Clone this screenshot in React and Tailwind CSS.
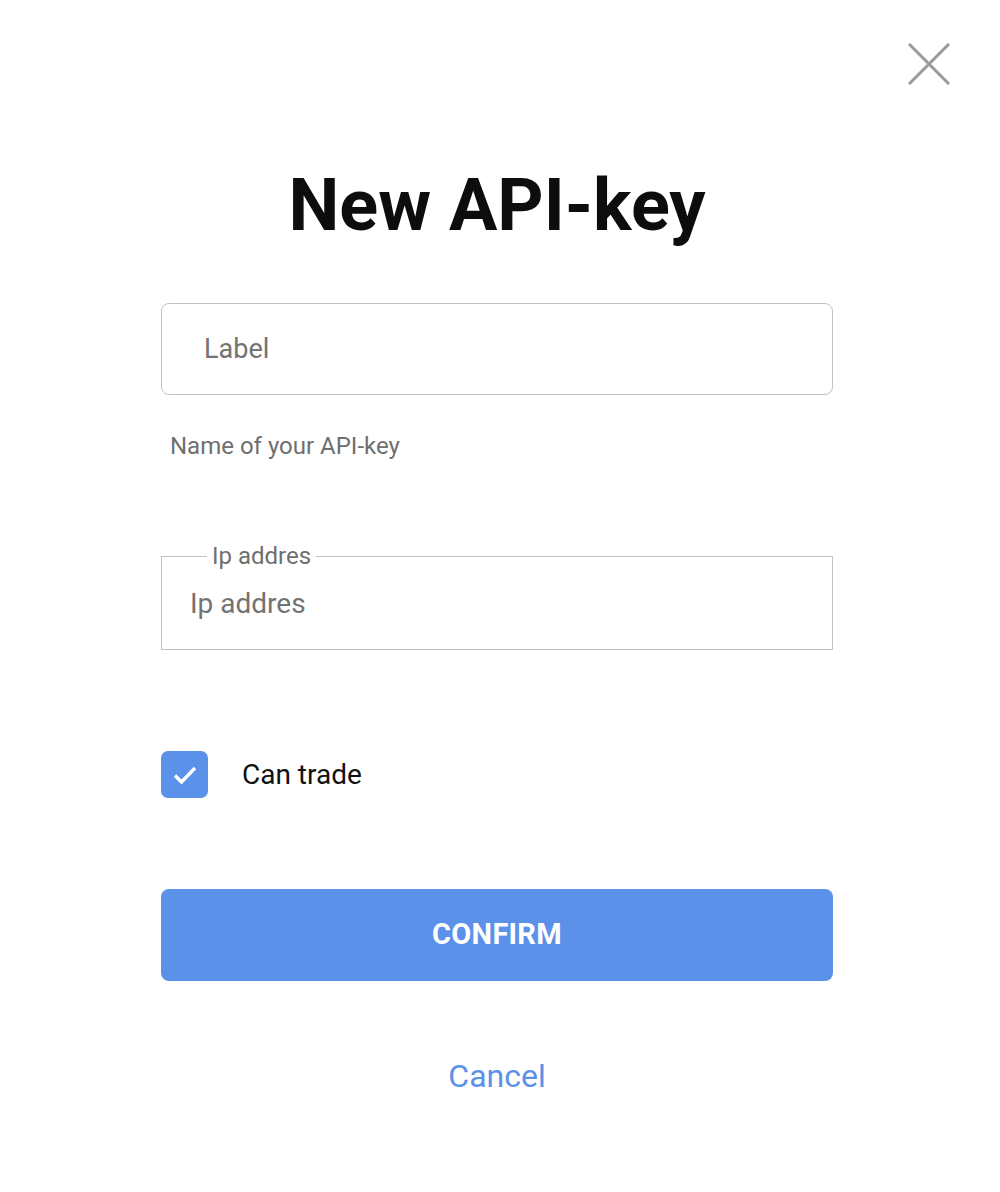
import React, { useState } from 'react';

const font = { fontFamily: 'Roboto, "Noto Sans", sans-serif' };

function CloseIcon() {
  return (
    <svg width="42" height="42" viewBox="0 0 42 42" fill="none">
      <path d="M1 1L41 41M41 1L1 41" stroke="#9a9a9a" strokeWidth="3" />
    </svg>
  );
}

function Checkbox({ checked, onChange }) {
  return (
    <button
      type="button"
      onClick={() => onChange(!checked)}
      className={`w-[47px] h-[47px] rounded-[7px] flex items-center justify-center ${
        checked ? 'bg-[#5b91e9]' : 'border-2 border-[#c4c4c4] bg-white'
      }`}
    >
      {checked && (
        <svg width="24" height="20" viewBox="0 0 24 20" fill="none">
          <path d="M2 10.5L8.5 17L22 3" stroke="white" strokeWidth="3.4" />
        </svg>
      )}
    </button>
  );
}

function App() {
  const [label, setLabel] = useState('');
  const [ip, setIp] = useState('');
  const [canTrade, setCanTrade] = useState(true);

  return (
    <div className="min-h-[1192px] bg-white" style={font}>
      <div className="flex justify-end pt-[43px] pr-[50px]">
        <button type="button">
          <CloseIcon />
        </button>
      </div>

      <div className="w-[672px] ml-[161px] flex flex-col">
        <h1 className="mt-[85px] text-center text-[72px] leading-none font-bold text-[#0d0d0d]">
          New API-key
        </h1>

        {/* label field */}
        <input
          value={label}
          onChange={(e) => setLabel(e.target.value)}
          placeholder="Label"
          className="mt-[61px] h-[92px] w-full rounded-[8px] border-[1.5px] border-[#c2c2c2] px-[42px] text-[27px] text-[#222] placeholder:text-[#737373] outline-none"
        />
        <p className="mt-[36px] pl-[9px] text-[24px] leading-[30px] text-[#6f6f6f]">
          Name of your API-key
        </p>

        {/* ip field */}
        <fieldset className="mt-[81px] h-[108px] border-[1.5px] border-[#c2c2c2] px-[28px]">
          <legend className="ml-[17px] px-[5px] text-[24px] leading-[28px] text-[#6f6f6f]">
            Ip addres
          </legend>
          <input
            value={ip}
            onChange={(e) => setIp(e.target.value)}
            placeholder="Ip addres"
            className="mt-[17px] h-[34px] w-full text-[28px] text-[#222] placeholder:text-[#737373] outline-none"
          />
        </fieldset>

        <div className="mt-[101px] flex items-center gap-[34px]">
          <Checkbox checked={canTrade} onChange={setCanTrade} />
          <span className="text-[28px] text-[#111]">Can trade</span>
        </div>

        <button
          type="button"
          className="mt-[91px] h-[92px] w-full rounded-[8px] bg-[#5b91e9] text-white text-[29px] font-bold tracking-[0.3px]"
        >
          CONFIRM
        </button>

        <button type="button" className="mt-[77px] self-center text-[32px] leading-[36px] text-[#5b91e9]">
          Cancel
        </button>
      </div>
    </div>
  );
}

export default App;
